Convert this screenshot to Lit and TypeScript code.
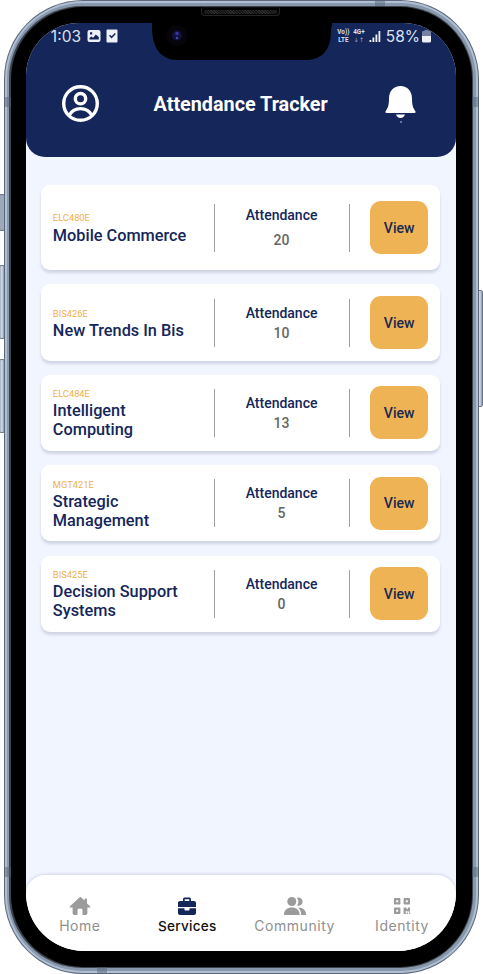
import { LitElement, html, css, svg } from "lit";
import { customElement } from "lit/decorators.js";
import { classMap } from "lit/directives/class-map.js";

interface Course { code: string; name: string; attended: number; }

const COURSES: Course[] = [
  { code: "ELC480E", name: "Mobile Commerce", attended: 20 },
  { code: "BIS426E", name: "New Trends In Bis", attended: 10 },
  { code: "ELC484E", name: "Intelligent Computing", attended: 13 },
  { code: "MGT421E", name: "Strategic Management", attended: 5 },
  { code: "BIS425E", name: "Decision Support Systems", attended: 0 },
];

@customElement("course-card")
class CourseCard extends LitElement {
  static properties = { course: { attribute: false } };
  declare course: Course;
  static styles = css`
    :host { display: grid; grid-template-columns: 160.8px 1px 134.4px 1px 1fr; align-items: center;
      box-sizing: border-box; height: 76.2px; padding: 0 12px; background: #fff; border-radius: 9px;
      box-shadow: 0 3px 3px rgba(40, 50, 90, .16); font-family: Roboto, sans-serif; color: #14265a; }
    :host([tall]) { height: 85px; }
    .subject { width: 140px; padding-top: 3px; }
    .code { font-size: 9.3px; line-height: 9px; color: #efb04a; font-weight: 400; padding-bottom: 3px; }
    .name { font-size: 16.3px; line-height: 19px; font-weight: 500; }
    .rule { height: 48px; background: #a0a0a3; }
    .count { text-align: center; font-size: 14px; line-height: 20px; font-weight: 500; margin-left: -.6px; }
    .number { color: #656565; font-size: 14px; }
    :host([tall]) .number { padding-top: 5px; }
    :host([tall]) .code { padding-bottom: 4px; }
    :host([tall]) .subject { padding-top: 2px; }
    .view { justify-self: end; width: 58px; height: 53px; border: 0; padding: 0; border-radius: 11px;
      background: #edb354; color: #1a2852; font: 500 14.1px Roboto, sans-serif; }
  `;
  render() {
    return html`
      <div class="subject"><div class="code">${this.course.code}</div><div class="name">${this.course.name}</div></div>
      <div class="rule"></div>
      <div class="count"><div>Attendance</div><div class="number">${this.course.attended}</div></div>
      <div class="rule"></div>
      <button class="view">View</button>`;
  }
}

const homeIcon = svg`<path d="M10 0 0 9.3c-.6.7-.2 1.3.5 1.3h2.1V16c0 1.2.7 2 1.9 2h3v-5c0-.7.5-1.2 1.2-1.2h2.6c.7 0 1.2.5 1.2 1.2v5h3c1.2 0 1.9-.8 1.9-2v-5.4h2.1c.7 0 1.1-.6.5-1.300l-3-2.700V2.500c0-.6-.4-1-.9-1h-.7c-.5 0-.9.4-.9.9v1.200L11.200.5C10.800.1 10.300 0 10 0Z"/>`;
const caseIcon = svg`<path fill-rule="evenodd" d="M6 4V2.200C6 1.100 6.800.5 7.800.5h4.400c1 0 1.800.6 1.800 1.700V4h3c1.100 0 2 .9 2 2v4H1V6c0-1.100.9-2 2-2h3Zm1.700 0h4.600V2.200H7.700V4ZM1 11.300h6.500v1.200c0 .6.4 1 1 1h3c.6 0 1-.4 1-1v-1.200H19V16c0 1.100-.9 2-2 2H3c-1.100 0-2-.9-2-2v-4.700Z"/>`;
const peopleIcon = svg`<circle cx="6.800" cy="4.500" r="4.500"/><path d="M12 .9a4.100 4.100 0 1 1 0 7.600 6.400 6.400 0 0 0 0-7.600ZM-.3 18c-.6 0-.8-.4-.7-1.200.5-3.800 3.300-6.200 7.800-6.200s7.300 2.400 7.800 6.200c.1.800-.1 1.200-.7 1.200H-.3Zm16.300 0c.3-2.800-.8-5.300-3-7.200 4.500-.3 7.600 2 8.100 6 .1.800-.2 1.200-.8 1.200H16Z"/>`;
const qrIcon = svg`<path fill-rule="evenodd" d="M3 1h4.400c.6 0 1 .4 1 1v4.400c0 .6-.4 1-1 1H3c-.6 0-1-.4-1-1V2c0-.6.4-1 1-1Zm1.200 2.200v2h2v-2h-2ZM12.600 1H17c.6 0 1 .4 1 1v4.400c0 .6-.4 1-1 1h-4.400c-.6 0-1-.4-1-1V2c0-.6.4-1 1-1Zm1.200 2.200v2h2v-2h-2ZM3 10.600h4.400c.6 0 1 .4 1 1V16c0 .6-.4 1-1 1H3c-.6 0-1-.4-1-1v-4.400c0-.6.4-1 1-1Zm1.200 2.200v2h2v-2h-2Zm7.400-2.200h2l2.200 2v-2H18v4h-2.600l-1.600-1.200V17h-2.200v-6.400Zm3 5h1.300V17h-1.300v-1.400Zm2.400 0h1.200V17H17v-1.400Z"/>`;

const TABS = [
  { label: "Home", icon: homeIcon, active: false },
  { label: "Services", icon: caseIcon, active: true },
  { label: "Community", icon: peopleIcon, active: false },
  { label: "Identity", icon: qrIcon, active: false },
];

@customElement("app-root")
class AppRoot extends LitElement {
  static styles = css`
    :host { display: block; position: relative; width: 483px; height: 974px; overflow: hidden; background: #fff; font-family: Roboto, sans-serif; }
    .key { position: absolute; box-sizing: border-box; width: 6px; border: 1px solid #6c7889; border-radius: 2px; background: linear-gradient(90deg, #9dabbd, #d3e0ef 45%, #8997aa); }
    .mute { left: -1px; top: 194px; height: 37px; background: #9ba8b9; }
    .up { left: -1px; top: 265px; height: 74px; }
    .down { left: -1px; top: 359px; height: 74px; }
    .power { left: 477px; top: 290px; height: 117px; }
    .phone { position: relative; box-sizing: border-box; margin-left: 3.7px; width: 475px; height: 973.5px; padding: 1px; border-radius: 79px; background: #5d6979; }
    .shine { height: 100%; box-sizing: border-box; padding: 2px; border-radius: 78px; background: #b0bfd4; }
    .metal { height: 100%; box-sizing: border-box; padding: 2.8px; border-radius: 76px; background: #8797ac; }
    .lip { height: 100%; box-sizing: border-box; padding: 1.2px; border-radius: 73px; background: #3c424b; }
    .bezel { height: 100%; box-sizing: border-box; padding: 16px 16.2px 15.4px 15.7px; border-radius: 72px; background: #000; }
    .screen { height: 100%; display: flex; flex-direction: column; border-radius: 53px 53px 58px 58px; overflow: hidden; background: #f1f5ff; }
    .top { background: #14265a; height: 133.7px; border-radius: 0 0 19px 19px; }
    .status { display: flex; justify-content: space-between; align-items: center; height: 27px; padding: 0 24.5px; color: #dce1ef; font: 400 15.5px Inter, sans-serif; }
    .side { display: flex; align-items: center; }
    .side svg { display: block; fill: #eef0f8; }
    .tiny { display: grid; gap: 0; font: 700 6.3px/8px Roboto, sans-serif; text-align: center; white-space: nowrap; letter-spacing: .1px; margin-right: 3.5px; }
    .arrows { font: 400 6px/8px "DejaVu Sans", sans-serif; opacity: .7; }
    .signal { margin: 0 4.5px 0 1px; }
    .cell { margin-left: 2px; }
    .bar { display: grid; grid-template-columns: 37px 1fr 31px; align-items: center; padding: 35px 39.5px 0 35.5px; height: 37px; }
    .bar h1 { margin: 0 2.5px 0 0; padding-top: 2px; text-align: center; color: #fff; font: 700 19.8px/24px Roboto, sans-serif; white-space: nowrap; }
    .bar svg { display: block; }
    .list { flex: 1; display: flex; flex-direction: column; gap: 14.2px; padding: 28.6px 15.3px 0 14.5px; }
    nav { height: 76.6px; box-sizing: border-box; display: grid; grid-template-columns: repeat(4, 107.4px); justify-content: center; padding-top: 21.2px; background: #fff; border-radius: 19px 19px 0 0; box-shadow: 0 -1px 3px rgba(60, 70, 110, .17); }
    .tab { display: flex; flex-direction: column; align-items: center; gap: 1px; color: #8f8f8f; font: 400 14px/18px Inter, sans-serif; letter-spacing: .55px; }
    .tab svg { width: 22px; height: 20px; fill: #9b9b9b; }
    .tab.active { color: #111; font-size: 13.6px; font-weight: 500; letter-spacing: .25px; }
    .active svg { fill: #14265a; }
    .notch { position: absolute; left: 148.3px; top: 21px; width: 180px; height: 39px; }
    .speaker { position: absolute; box-sizing: border-box; left: 197.8px; top: 7px; width: 79px; height: 9px; border: 1px solid #242528; border-top-color: #0c0c0c; border-radius: 2px 2px 4px 4px; background: #040404; padding: 1.5px 2px; }
    .mesh { height: 4px; border-radius: 2px; background: repeating-linear-gradient(45deg, #141414 0 1px, #2b2b2b 1px 2px); }
    .band { position: absolute; background: rgba(80, 96, 118, .45); }
    .b1 { left: 0; top: 97px; width: 7px; height: 10px; }
    .b2 { left: 468px; top: 97px; width: 7px; height: 10px; }
    .b3 { left: 0; top: 867px; width: 7px; height: 10px; }
    .b4 { left: 468px; top: 867px; width: 7px; height: 10px; }
    .b5 { left: 371px; top: 0; width: 10px; height: 6px; }
    .b6 { left: 93px; top: 967px; width: 10px; height: 6px; }
  `;
  render() {
    return html`
      <div class="key mute"></div><div class="key up"></div><div class="key down"></div><div class="key power"></div>
      <div class="phone">
        <div class="shine"><div class="metal"><div class="lip"><div class="bezel">
          <div class="screen">
            <header class="top">
              <div class="status">
                <div class="side">
                  <span>1:03</span>
                  <svg width="38" height="14" viewBox="-.5 0 38 14">
                    <path fill-rule="evenodd" d="M8 1h9c1.100 0 2 .9 2 2v8c0 1.100-.9 2-2 2H8c-1.100 0-2-.9-2-2V3c0-1.100.9-2 2-2Zm0 9.500h9.300V8l-3-2.500-2.600 3.200L9.800 7.500 8 9v1.500ZM8.500 3.200v2.200h2.200V3.200H8.500ZM26 .6h9c.6 0 1 .4 1 1v10.800c0 .6-.4 1-1 1h-9c-.6 0-1-.4-1-1V1.600c0-.6.400-1 1-1Zm1.500 6.100 2.600 2.700 4.200-4.300-1-1-3.200 3.200-1.600-1.600-1 1Z"/>
                  </svg>
                </div>
                <div class="side">
                  <div class="tiny"><span>Vo))</span><span>LTE</span></div>
                  <div class="tiny"><span>4G+</span><span class="arrows">↓↑</span></div>
                  <svg class="signal" width="12" height="13"><path d="M.5 10h1.800v2H.5zM3.500 7.500h1.800V12H3.500zM6.500 4.500h1.800V12H6.500zM9.500 1h1.800v11H9.500z"/></svg>
                  <span>58%</span>
                  <svg class="cell" width="9" height="13"><path opacity=".45" d="M2.500 0h4v1H8q1 0 1 1v4H0V2q0-1 1-1h1.500z"/><path d="M0 6h9v5q0 1.500-1.500 1.500h-6Q0 12.500 0 11z"/></svg>
                </div>
              </div>
              <div class="bar">
                <svg width="37" height="37" fill="none" stroke="#fff" stroke-width="3.400"><circle cx="18.500" cy="18.500" r="16.800"/><circle cx="18.500" cy="13.700" r="5.200"/><path d="M7 30.500c2.300-4.300 6.200-6.900 11.500-6.900S27.700 26.200 30 30.500"/></svg>
                <h1>Attendance Tracker</h1>
                <svg width="31" height="38" fill="#fff"><path d="M4 13.500C4 6 8.600 1 15.500 1S27 6 27 13.500c0 6.800 1 9.200 3.200 12.500.8 1.300.5 2-1 2H1.800c-1.500 0-1.800-.7-1-2C3 22.700 4 20.300 4 13.500ZM11 29.500h9c-.8 2.300-2.300 3.500-4.500 3.500S11.800 31.800 11 29.500Z"/><circle cx="16" cy="37" r=".7"/></svg>
              </div>
            </header>
            <main class="list">
              ${COURSES.map((c, i) => html`<course-card .course=${c} ?tall=${i === 0}></course-card>`)}
            </main>
            <nav>
              ${TABS.map(t => html`<div class=${classMap({ tab: true, active: t.active })}><svg viewBox="-1 -1 22 20">${t.icon}</svg><span>${t.label}</span></div>`)}
            </nav>
          </div>
        </div></div></div></div>
        <svg class="notch" viewBox="0 0 180 39"><path d="M-4 0v2C-1 2 0 3.500 0 6c0 20 8 33 26 33h128c15 0 25-9 25-29 0-5 1-8 5-8V0Z"/><circle cx="25" cy="14.500" r="10.500" fill="#07050b"/><circle cx="25" cy="14.500" r="5" fill="#11113c"/><circle cx="25" cy="12.500" r="1.800" fill="#3535a0"/><circle cx="25" cy="17" r="1.200" fill="#4646a8"/></svg>
        <div class="speaker"><div class="mesh"></div></div>
        <div class="band b1"></div><div class="band b2"></div><div class="band b3"></div><div class="band b4"></div><div class="band b5"></div><div class="band b6"></div>
      </div>`;
  }
}
